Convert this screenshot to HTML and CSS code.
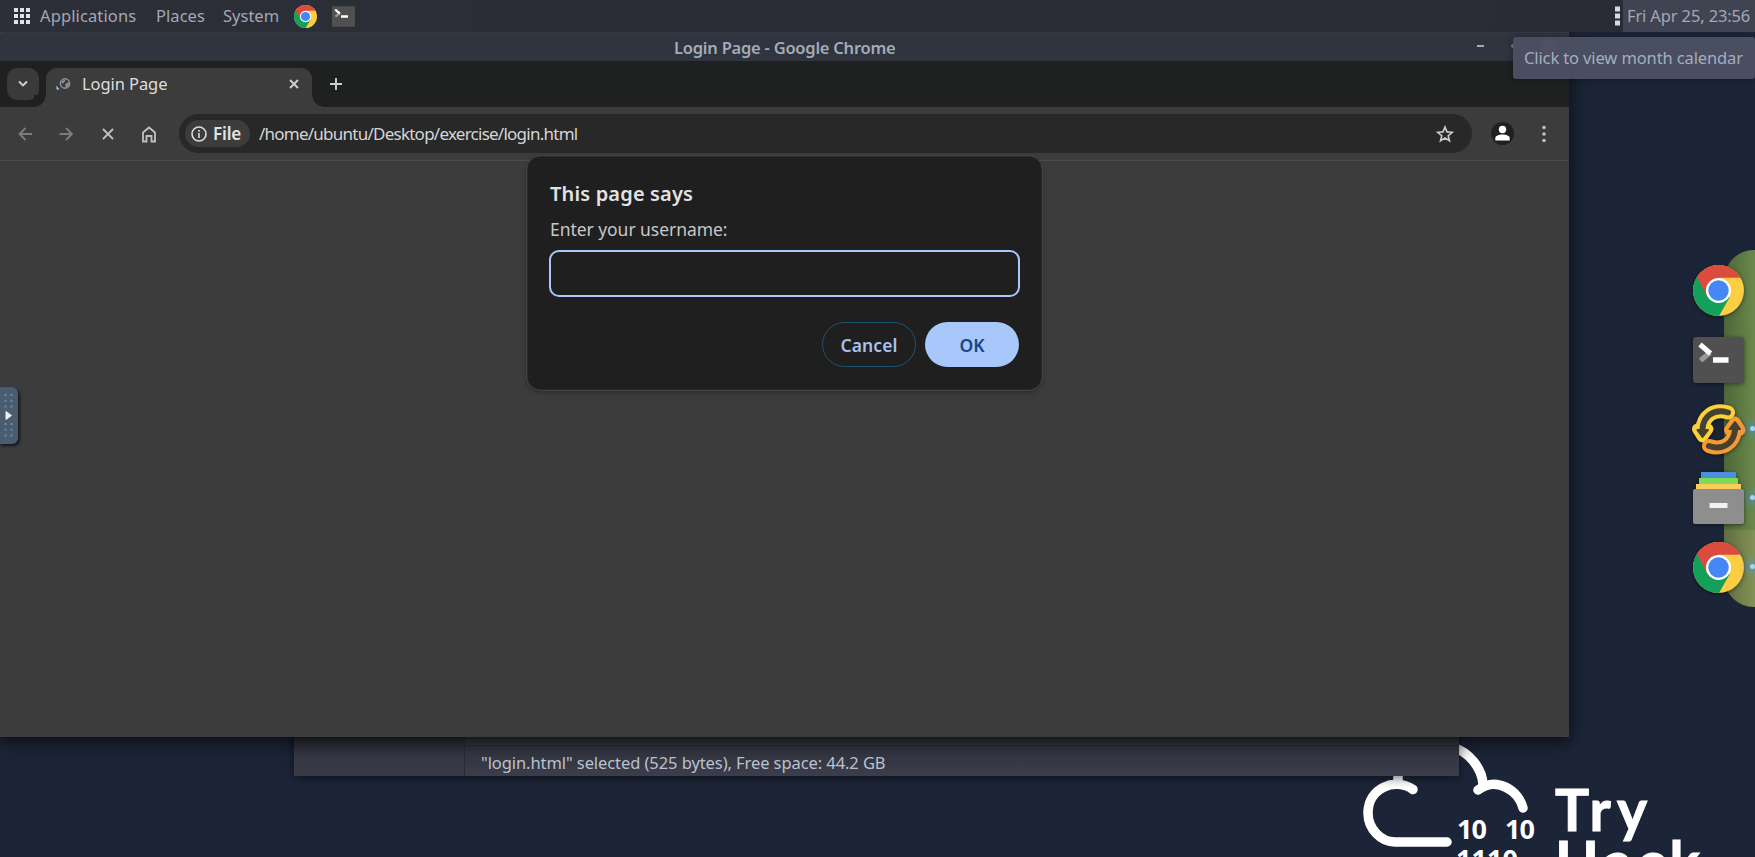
FILE: index.html
```html
<!DOCTYPE html>
<html lang="en">
<head>
<meta charset="utf-8">
<title>Login Page</title>
<link rel="stylesheet" href="styles.css">
</head>
<body>
<svg width="0" height="0" class="defs">
  <defs>
    <symbol id="chrome" viewBox="0 0 50 50">
      <circle cx="25" cy="25" r="25" fill="#fdcd43"/>
      <path d="M25 25 L3.9 11.6 A25 25 0 0 0 25.5 50 L36 31.5 Z" fill="#14a05a"/>
      <path d="M3.9 11.6 A25 25 0 0 1 46.6 12.5 H25 L14 31.2 Z" fill="#db4c3f"/>
      <circle cx="25" cy="25" r="12.3" fill="#fff"/>
      <circle cx="25" cy="25" r="10" fill="#4587f4"/>
    </symbol>
    <symbol id="terminal" viewBox="0 0 51 46">
      <rect width="51" height="46" rx="3" fill="#505050"/>
      <path d="M17 15.500 L7.500 23.500" stroke="#999" stroke-width="5"/>
      <path d="M7 7.500 L17.500 16.500" stroke="#fff" stroke-width="5"/>
      <path d="M20 23 H35.500" stroke="#fff" stroke-width="5.500"/>
    </symbol>
  </defs>
</svg>
<main class="desktop">
  <svg class="wallpaper-logo" viewBox="0 0 415 137" width="415" height="137">
    <g fill="none" stroke="#fff" stroke-width="9.500" stroke-linecap="round" stroke-linejoin="round">
      <path d="M73 69.500 C55 57 28 68 28 93 C28 109 41 122 55 122 H107"/>
      <path d="M58 62 V56"/>
      <path d="M112 27 C130 32 142 49 143 64"/>
      <path d="M138 70 C157 56 179 71 183 88"/>
    </g>
    <g class="bits">
      <text x="117" y="119" textLength="30">10</text>
      <text x="165" y="119" textLength="30">10</text>
      <text x="116" y="149" textLength="62">1110</text>
    </g>
    <g class="brand">
      <text x="215" y="111" textLength="92">Try</text>
      <text x="215" y="163" textLength="145">Hack</text>
    </g>
  </svg>

  <section class="files-window">
    <div class="files-side"></div>
    <div class="files-main">
      <div class="files-list"></div>
      <div class="files-status"><span class="t-status">"login.html" selected (525 bytes), Free space: 44.2 GB</span></div>
    </div>
  </section>

  <section class="browser">
    <header class="titlebar"><span class="t-title">Login Page - Google Chrome</span><i class="minimize"></i><i class="maximize"></i><i class="close-dot"></i></header>
    <nav class="tabs">
      <button class="tab-menu"><svg width="12" height="8" viewBox="0 0 12 8"><path d="M2 1.500 L6 5.500 L10 1.500"/></svg></button>
      <div class="tab">
        <svg class="favicon" width="15" height="14" viewBox="0 0 15 14"><circle cx="9" cy="6.500" r="4.700" fill="none" stroke="#8c949c" stroke-width="1.400"/><path d="M5.500 4 L9.500 2.500 L8.500 5 L6 7 Z M9.500 7 L13 5 L12.500 9 L9.500 11Z" fill="#8c949c"/><path d="M.5 8.500 L3.500 12.500 H.5Z" fill="#a8c7fa"/></svg>
        <span class="t-tab">Login Page</span>
        <svg class="tab-close" width="10" height="10" viewBox="0 0 10 10"><path d="M1 1 L9 9 M9 1 L1 9"/></svg>
      </div>
      <svg class="new-tab" width="12" height="12" viewBox="0 0 12 12"><path d="M6 0 V12 M0 6 H12"/></svg>
    </nav>
    <div class="toolbar">
      <div class="nav-icons">
        <svg class="dim" viewBox="0 0 18 18"><path d="M16 9 H3.500 M9.500 3 L3.500 9 L9.500 15"/></svg>
        <svg class="dim" viewBox="0 0 18 18"><path d="M2.500 9 H15 M9 3 L15 9 L9 15"/></svg>
        <svg viewBox="0 0 18 18"><path d="M4 4 L14 14 M14 4 L4 14"/></svg>
        <svg viewBox="0 0 18 18"><path d="M3 7.500 L9 2.500 L15 7.500 V16.500 H11.500 V11 H6.500 V16.500 H3 Z"/></svg>
      </div>
      <div class="omnibox">
        <span class="chip">
          <svg width="16" height="16" viewBox="0 0 16 16"><circle cx="8" cy="8" r="7"/><path d="M8 7 V12 M8 4 V5.700"/></svg>
          <b class="t-file">File</b>
        </span>
        <span class="t-url">/home/ubuntu/Desktop/exercise/login.html</span>
        <svg class="star" width="18" height="18" viewBox="0 0 18 18"><path d="M9 2 L11 6.900 L16.300 7.300 L12.200 10.700 L13.500 15.800 L9 13 L4.500 15.800 L5.800 10.700 L1.700 7.300 L7 6.900 Z"/></svg>
      </div>
      <span class="profile"><svg width="23" height="23" viewBox="0 0 23 23"><circle cx="11.500" cy="7.500" r="3.700"/><path d="M4.300 18.500 V16 C4.300 11.200 18.700 11.200 18.700 16 V18.500 Z"/></svg></span>
      <svg class="menu" width="4" height="18" viewBox="0 0 4 18"><circle cx="2" cy="2.500" r="1.800"/><circle cx="2" cy="9" r="1.800"/><circle cx="2" cy="15.500" r="1.800"/></svg>
    </div>
    <div class="page">
      <div class="dialog">
        <h1><span class="t-says">This page says</span></h1>
        <label for="user"><span class="t-enter">Enter your username:</span></label>
        <input id="user" type="text">
        <div class="actions">
          <button class="cancel"><span class="t-cancel">Cancel</span></button>
          <button class="ok"><span class="t-ok">OK</span></button>
        </div>
      </div>
    </div>
  </section>

  <header class="panel">
    <svg class="grid" width="16" height="16" viewBox="0 0 16 16"><path d="M0 2 H16 M0 8 H16 M0 14 H16"/></svg>
    <span class="m-app">Applications</span>
    <span class="m-places">Places</span>
    <span class="m-system">System</span>
    <svg class="p-chrome" width="23" height="23"><use href="#chrome"/></svg>
    <svg class="p-term" width="23" height="21"><use href="#terminal"/></svg>
    <svg class="tray" width="5" height="20" viewBox="0 0 5 20"><path d="M0 .5h5v5h-5z M0 7.500h5v5h-5z M0 14.500h5v5h-5z"/></svg>
    <span class="clock"><span class="t-clock">Fri Apr 25, 23:56</span></span>
  </header>
  <div class="tooltip"><span class="t-tip">Click to view month calendar</span></div>

  <aside class="dock">
    <div class="dock-back"></div>
    <svg width="51" height="51"><use href="#chrome"/></svg>
    <svg width="51" height="46"><use href="#terminal"/></svg>
    <svg class="sync" width="55" height="51" viewBox="0 0 55 51">
      <g fill="none" stroke-linecap="round" stroke-linejoin="round">
        <path d="M37 8.500 C22 4 12 13 11.500 25" stroke="#fbd23a" stroke-width="14"/>
        <path d="M6.500 25 L11.500 33 L17 25 Z" stroke="#fbd23a" stroke-width="11"/>
        <path d="M18 42 C33 47 43 38 44 26" stroke="#f79a35" stroke-width="14"/>
        <path d="M38.500 26 L44 18 L49 26 Z" stroke="#f79a35" stroke-width="11"/>
        <path d="M37 8.500 C22 4 12 13 11.500 25" stroke="#45402f" stroke-width="6"/>
        <path d="M6.500 26 L11.500 33 L17 26 Z" fill="#45402f" stroke="#45402f" stroke-width="2"/>
        <path d="M18 42 C33 47 43 38 44 26" stroke="#45402f" stroke-width="6"/>
        <path d="M38.500 25 L44 18 L49 25 Z" fill="#45402f" stroke="#45402f" stroke-width="2"/>
      </g>
    </svg>
    <svg width="51" height="52" viewBox="0 0 51 52"><path d="M8 0h35v6h-35z" fill="#4a90d9"/><path d="M6 6h39v6h-39z" fill="#7ed957"/><path d="M3 12h45v6h-45z" fill="#f8cd5c"/><rect y="17" width="51" height="35" rx="2" fill="#8e8e8e"/><path d="M16.500 31h18v5h-18z" fill="#f2f2f2"/></svg>
    <svg width="51" height="51"><use href="#chrome"/></svg>
    <i class="dot d1"></i><i class="dot d2"></i><i class="dot d3"></i>
  </aside>

  <div class="handle"><svg width="18" height="57" viewBox="0 0 18 57"><g fill="none" stroke="#76879b" stroke-width="2" stroke-dasharray="2 3.700"><path d="M6.500 7V21M12.500 7V21M6.500 36V50M12.500 36V50"/></g><path d="M7 24.500 L12.500 28.500 L7 32.500Z" fill="#eee" stroke="#eee"/></svg></div>
</main>
</body>
</html>
```
FILE: styles.css
```css
* { box-sizing: border-box; }
body { margin: 0; font-family: "Noto Sans", "Open Sans", sans-serif; font-size: 16.5px; }
svg { flex: none; display: block; }
button { border: 0; padding: 0; font: inherit; }
span, b { white-space: nowrap; }
.defs { position: absolute; }
.desktop { position: relative; width: 1755px; height: 857px; overflow: hidden; background: #1c2538; }

.wallpaper-logo { position: absolute; left: 1340px; top: 720px; }
.wallpaper-logo text { fill: #fff; font-weight: 700; }
.bits { font-family: "Noto Sans", sans-serif; font-size: 27px; }
.brand { font-family: Lato, sans-serif; font-size: 57px; stroke: #fff; stroke-width: 1px; }

.files-window { position: absolute; left: 294px; top: 700px; width: 1165px; height: 76px; display: flex; background: #343642; box-shadow: 0 2px 10px rgba(0,0,0,.55); }
.files-side { width: 171px; background: linear-gradient(#2a2c34 50%, #373946 80%); border-right: 1px solid #292c35; }
.files-main { flex: 1; display: flex; flex-direction: column; }
.files-list { height: 46px; background: linear-gradient(#2c2f36 80%, #353841); border-bottom: 1px solid #292c35; }
.files-status { flex: 1; display: flex; align-items: center; padding: 3px 0 0 16px; background: linear-gradient(#31343f, #3b3d4b); color: #bcc2cf; }
.t-status { letter-spacing: -.08px; }

.browser { position: absolute; left: 0; top: 32px; width: 1569px; height: 705px; display: flex; flex-direction: column; background: #3c3c3c; box-shadow: 0 4px 16px 2px rgba(0,0,0,.6); }
.titlebar { position: relative; height: 29px; display: flex; align-items: center; padding-left: 674px; background: #30343f; border-top: 1px solid #343843; border-radius: 5px 5px 0 0; color: #a3abb9; font-weight: 600; letter-spacing: -.23px; }
.minimize { position: absolute; left: 1477px; top: 12px; width: 7px; height: 2px; background: #a3abb9; }
.maximize { position: absolute; left: 1511px; top: 11px; width: 4px; height: 4px; border-radius: 50%; background: #777d8b; }
.close-dot { position: absolute; left: 1541px; top: 6px; width: 16px; height: 16px; border-radius: 50%; background: #cc575d; }
.tabs { height: 46px; display: flex; background: #1f2020; padding: 7px 0 0 7px; }
.tab-menu { width: 32px; height: 32px; border-radius: 10px; background: #3a3a3a; display: flex; align-items: center; justify-content: center; }
.tab-menu svg, .tab-close, .new-tab { fill: none; stroke: #d0d0d0; stroke-width: 1.9; }
.tab { position: relative; width: 266px; height: 39px; margin-left: 7px; border-radius: 11px 11px 0 0; background: #3c3c3c; display: flex; padding: 0 13px 7px 10px; align-items: center; color: #dedede; }
.tab::before, .tab::after { content: ""; position: absolute; bottom: 0; width: 12px; height: 12px; }
.tab::before { left: -12px; background: radial-gradient(circle at 0 0, #1f2020 11.5px, #3c3c3c 12px); }
.tab::after { right: -12px; background: radial-gradient(circle at 100% 0, #1f2020 11.5px, #3c3c3c 12px); }
.favicon { margin-right: 11px; }
.t-tab { padding-bottom: 2px; letter-spacing: -.08px; }
.tab-close { margin-left: auto; }
.new-tab { margin: 10px 0 0 18px; }
.toolbar { height: 54px; background: #3c3c3c; border-bottom: 1px solid #4b4b4b; display: flex; align-items: center; }
.nav-icons { display: flex; gap: 23.3px; padding-left: 16px; }
.nav-icons svg { width: 18px; height: 18px; fill: none; stroke: #c0c0c0; stroke-width: 1.8; }
.nav-icons svg.dim { stroke: #7c7c7c; }
.omnibox { width: 1293px; height: 39px; margin-left: 21px; border-radius: 20px; background: #282828; display: flex; align-items: center; padding: 0 18px 0 6px; color: #d5d5d5; }
.chip { width: 65px; height: 27px; border-radius: 14px; background: #3c3c3c; display: flex; align-items: center; padding-left: 6px; gap: 6px; margin-right: 9px; color: #e3e3e3; }
.chip svg { fill: none; stroke: #dcdcdc; stroke-width: 1.6; }
.t-file { font-weight: 600; font-size: 17px; letter-spacing: -.1px; padding-bottom: 1px; }
.t-url { font-size: 17px; letter-spacing: -.75px; padding-bottom: 1px; }
.star { margin-left: auto; fill: none; stroke: #ccc; stroke-width: 1.6; }
.profile { width: 23px; height: 23px; border-radius: 50%; background: #1f2020; margin-left: 19px; }
.profile svg { fill: #fff; }
.menu { margin-left: 28px; fill: #c0c0c0; }
.page { flex: 1; background: #3c3c3c; }
.dialog { position: relative; width: 515px; height: 234px; margin: -5px 0 0 527px; padding: 22px 22px; background: #1f1f1f; border: 1px solid #292929; outline: 1px solid #444; border-radius: 13px; box-shadow: 0 2px 5px rgba(0,0,0,.35); display: flex; flex-direction: column; }
.dialog h1 { margin: 0; font-size: 20px; line-height: 30px; font-weight: 600; color: #e3e3e3; letter-spacing: .16px; }
.dialog label { line-height: 24px; margin-top: 8px; font-size: 17.5px; color: #c7c7c7; letter-spacing: -.05px; }
.dialog input { margin: 9px -1px 0 -1px; height: 47px; border: 2px solid #a8c7fa; border-radius: 10px; background: transparent; outline: 0; }
.actions { display: flex; justify-content: flex-end; gap: 9px; margin-top: 25px; }
.actions button { width: 94px; height: 45px; border-radius: 23px; font-size: 17.5px; font-weight: 600; }
.actions .cancel { border: 1.5px solid #195673; background: none; color: #a8c0ec; }
.t-cancel { letter-spacing: .05px; }
.ok { background: #a8c7fa; color: #1b4488; }

.panel { position: absolute; left: 0; top: 0; width: 1755px; height: 32px; display: flex; align-items: center; background: linear-gradient(100deg, #2c2e38, #292c34); color: #a2a8b5; }
.panel span { padding-bottom: 1px; }
.grid { margin: 0 10px 0 14px; stroke: #dde2ee; stroke-width: 4; stroke-dasharray: 4 2; }
.m-app { width: 116px; letter-spacing: .12px; }
.m-places { width: 67px; letter-spacing: .05px; }
.m-system { width: 71px; }
.p-term { margin-left: 15px; }
.tray { margin-left: auto; margin-right: 3px; fill: #d6dae5; }
.panel .clock { width: 132px; height: 32px; padding: 0 0 0 4px; background: #404452; display: flex; align-items: center; }
.t-clock { letter-spacing: -.14px; }
.tooltip { position: absolute; left: 1513px; top: 37px; width: 242px; height: 42px; display: flex; align-items: center; padding: 0 0 1px 11px; border-radius: 3px; background: rgba(75,80,98,.97); color: #a5adbd; box-shadow: 0 1px 6px rgba(0,0,0,.35); letter-spacing: -.12px; }

.dock { position: absolute; left: 1692px; top: 265px; width: 63px; display: flex; flex-direction: column; padding-left: 1px; }
.dock > svg { position: relative; left: -.5px; filter: drop-shadow(0 1px 2px rgba(0,0,0,.5)); }
.dock > svg:nth-of-type(2) { margin-top: 21px; }
.dock > svg:nth-of-type(3) { margin: 21px 0 0 -2px; overflow: visible; }
.dock > svg:nth-of-type(4) { margin-top: 17px; }
.dock > svg:nth-of-type(5) { margin-top: 18px; }
.dock-back { position: absolute; left: 32px; top: -15px; width: 60px; height: 357px; border-radius: 34px; background: linear-gradient(90deg, rgba(15,25,15,.35), transparent 36px), linear-gradient(#708f4f 0 78.5%, #8a995a 78.5%); }
.dot { position: absolute; left: 58px; width: 5px; height: 5px; border-radius: 50%; background: #a5d2ff; box-shadow: 0 0 9px 4px rgba(70,150,240,.5); }
.d1 { top: 161px; }
.d2 { top: 230px; }
.d3 { top: 299px; }
.handle { position: absolute; left: -1px; top: 387px; width: 19px; height: 57px; background: #4a5c70; border-radius: 0 6px 6px 0; box-shadow: 2px 2px 3px rgba(0,0,0,.6); }
```
